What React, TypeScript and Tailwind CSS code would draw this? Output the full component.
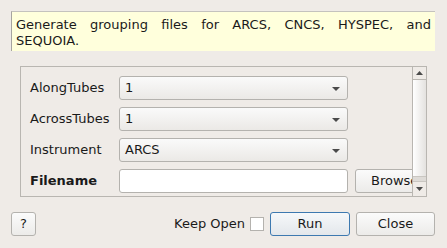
import React from 'react';

const FONT = { fontFamily: '"DejaVu Sans", Verdana, sans-serif' };

function Combo({ value }: { value: string }) {
    return (
        <div className="relative flex h-[24px] w-[229px] shrink-0 items-center rounded-[3px] border border-[#b4b2ae] bg-gradient-to-b from-[#fafafa] to-[#ebe9e6] pl-[5px] text-[13px] text-[#1a1a1a]">
            <span>{value}</span>
            {/* drop-down arrow */}
            <svg className="absolute right-[7px] top-[10px]" width="8" height="4" viewBox="0 0 8 4">
                <polygon points="0,0 8,0 4,4" fill="#4a4a4a" />
            </svg>
        </div>
    );
}

function Btn({ children, className = '', primary = false }: { children: React.ReactNode; className?: string; primary?: boolean }) {
    return (
        <div
            className={`flex h-[24px] shrink-0 items-center justify-center rounded-[3px] border text-[13px] text-[#1a1a1a] ${
                primary
                    ? 'border-[#3d79b0] bg-gradient-to-b from-[#f6f8fa] to-[#e3e7eb]'
                    : 'border-[#b4b2ae] bg-gradient-to-b from-[#fbfbfb] to-[#ecebe9]'
            } ${className}`}
        >
            {children}
        </div>
    );
}

export default function App() {
    const rows = [
        { label: 'AlongTubes', value: '1' },
        { label: 'AcrossTubes', value: '1' },
        { label: 'Instrument', value: 'ARCS' },
    ];

    return (
        <div className="flex h-[248px] w-[447px] flex-col overflow-hidden bg-[#efebe7] pl-[11px] pr-[12px] pt-[11px]" style={FONT}>
            {/* Description */}
            <div className="h-[40px] border-l border-t border-l-[#a6a4a0] border-t-[#c4c2be] bg-[#ffffdc] pl-[4px] pr-[4px] pt-[5px] text-justify text-[13px] leading-[16px] text-[#1a1a1a]">
                Generate grouping files for ARCS, CNCS, HYSPEC, and SEQUOIA.
            </div>

            {/* Scroll area */}
            <div className="ml-[9px] mr-[8px] mt-[15px] flex h-[131px] border border-[#b9b6b1]">
                <div className="min-w-0 flex-1 overflow-hidden pl-[9px] pt-[9px]">
                    <div className="flex flex-col gap-[7px]">
                        {rows.map((r) => (
                            <div key={r.label} className="flex items-center">
                                <div className="w-[89px] shrink-0 text-[13px] text-[#1a1a1a]">{r.label}</div>
                                <Combo value={r.value} />
                            </div>
                        ))}
                        <div className="flex items-center">
                            <div className="w-[89px] shrink-0 text-[13px] font-bold text-[#1a1a1a]">Filename</div>
                            <div className="h-[24px] w-[229px] shrink-0 rounded-[3px] border border-[#b4b2ae] bg-white" />
                            <Btn className="ml-[7px] w-[80px] justify-start pl-[15px]">Browse</Btn>
                        </div>
                    </div>
                </div>
                {/* Scrollbar */}
                <div className="flex w-[14px] shrink-0 flex-col border-l border-[#b9b6b1] bg-[#efebe7]">
                    <div className="flex h-[13px] items-center justify-center border-b border-[#b9b6b1]">
                        <svg width="7" height="4" viewBox="0 0 7 4">
                            <polygon points="0,4 7,4 3.5,0" fill="#4a4a4a" />
                        </svg>
                    </div>
                    <div className="h-[96px] bg-gradient-to-r from-[#ffffff] to-[#e4e2df]" />
                    <div className="h-[6px] border-y border-[#c9c6c1] bg-[#dedbd7]" />
                    <div className="flex flex-1 items-center justify-center">
                        <svg width="7" height="4" viewBox="0 0 7 4">
                            <polygon points="0,0 7,0 3.5,4" fill="#4a4a4a" />
                        </svg>
                    </div>
                </div>
            </div>

            {/* Bottom buttons */}
            <div className="mt-[15px] flex items-center">
                <Btn className="w-[25px]">?</Btn>
                <div className="flex-1" />
                <span className="text-[13px] text-[#1a1a1a]">Keep Open</span>
                <div className="ml-[5px] h-[14px] w-[14px] border border-[#b4b2ae] bg-white" />
                <Btn primary className="ml-[6px] w-[80px]">Run</Btn>
                <Btn className="ml-[6px] w-[79px]">Close</Btn>
            </div>
        </div>
    );
}
